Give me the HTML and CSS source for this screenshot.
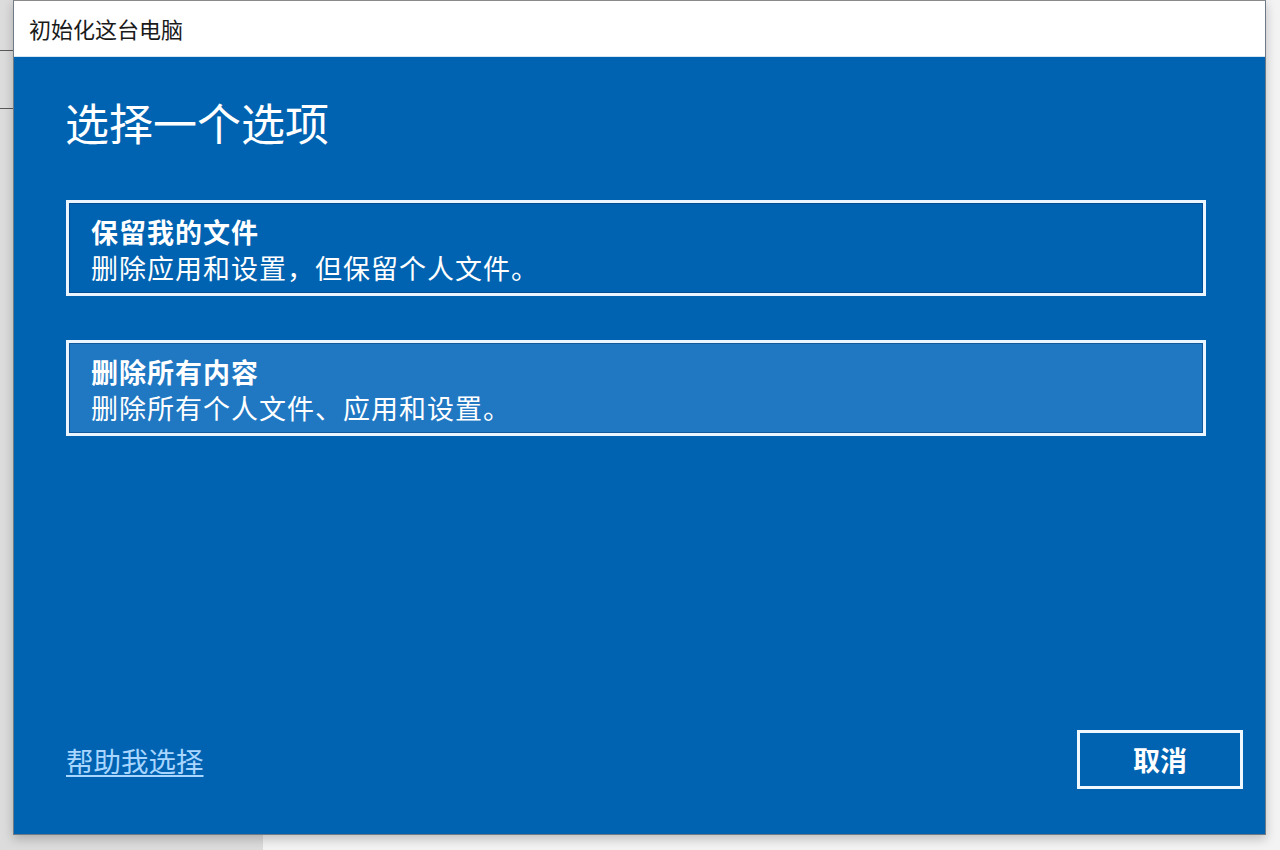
FILE: index.html
```html
<!DOCTYPE html>
<html lang="zh-CN">
<head>
<meta charset="utf-8">
<title>初始化这台电脑</title>
<link rel="stylesheet" href="styles.css">
</head>
<body>
<div class="desktop">
  <div class="window">
    <div class="titlebar">初始化这台电脑</div>
    <div class="content">
      <h1 class="heading">选择一个选项</h1>
      <div class="options">
        <div class="option">
          <div class="option-title">保留我的文件</div>
          <div class="option-desc">删除应用和设置，但保留个人文件。</div>
        </div>
        <div class="option option-hover">
          <div class="option-title">删除所有内容</div>
          <div class="option-desc">删除所有个人文件、应用和设置。</div>
        </div>
      </div>
      <div class="footer">
        <a class="help-link" href="#">帮助我选择</a>
        <button class="cancel-btn" type="button">取消</button>
      </div>
    </div>
  </div>
</div>
</body>
</html>
```

FILE: styles.css
```css
* {
  box-sizing: border-box;
}

html, body {
  margin: 0;
  padding: 0;
}

body {
  width: 1280px;
  height: 850px;
  overflow: hidden;
  font-family: "Noto Sans CJK SC", "Noto Sans", sans-serif;
  background-color: #ececec;
  background-image:
    linear-gradient(to bottom, transparent 50px, #5a5a5a 50px, #5a5a5a 51px, transparent 51px, transparent 108px, #5a5a5a 108px, #5a5a5a 109px, transparent 109px),
    linear-gradient(to right, #dcdcdc 263px, #f3f3f3 263px);
  background-size: 13px 850px, 1280px 850px;
  background-repeat: no-repeat;
}

.desktop {
  width: 1280px;
  height: 850px;
  padding: 0 14px 15px 13px;
  display: flex;
}

.window {
  width: 1253px;
  height: 835px;
  border: 1px solid #6e7a86;
  border-top-color: #8a8a8a;
  display: flex;
  flex-direction: column;
  background: #0063b1;
  box-shadow: 0 4px 10px rgba(0, 0, 0, 0.22);
}

.titlebar {
  height: 56px;
  flex: none;
  background: #ffffff;
  border-bottom: 1px solid #d3e6f4;
  color: #1a1a1a;
  font-size: 22px;
  line-height: 55px;
  padding-left: 15px;
}

.content {
  flex: 1;
  display: flex;
  flex-direction: column;
  padding: 35px 0 0 52px;
  color: #ffffff;
}

.heading {
  margin: 0;
  font-size: 44px;
  font-weight: normal;
  line-height: 60px;
  height: 60px;
  text-indent: -1px;
}

.options {
  margin-top: 48px;
  display: flex;
  flex-direction: column;
  gap: 44px;
}

.option {
  width: 1140px;
  height: 96px;
  border: 3px solid #eaf5ff;
  box-shadow: inset 0 0 0 1px rgba(0, 50, 110, 0.45);
  padding: 11px 22px 10px 22px;
  background: #0063b1;
}

.option-hover {
  background: #2078c3;
}

.option-title {
  font-size: 27px;
  line-height: 36px;
  font-weight: bold;
  letter-spacing: 1px;
}

.option-desc {
  font-size: 27px;
  line-height: 36px;
  letter-spacing: 1px;
}

.footer {
  margin-top: auto;
  display: flex;
  justify-content: space-between;
  align-items: center;
  padding: 0 22px 45px 0;
}

.help-link {
  font-size: 27.5px;
  line-height: 36px;
  color: #a8d6ff;
  text-decoration: underline;
  text-underline-offset: 3px;
  text-decoration-thickness: 2px;
}

.cancel-btn {
  width: 166px;
  height: 59px;
  border: 3px solid #f0f8ff;
  background: transparent;
  color: #ffffff;
  font-family: "Noto Sans CJK SC", "Noto Sans", sans-serif;
  font-size: 27px;
  font-weight: bold;
  line-height: 36px;
  padding: 0;
}
```
